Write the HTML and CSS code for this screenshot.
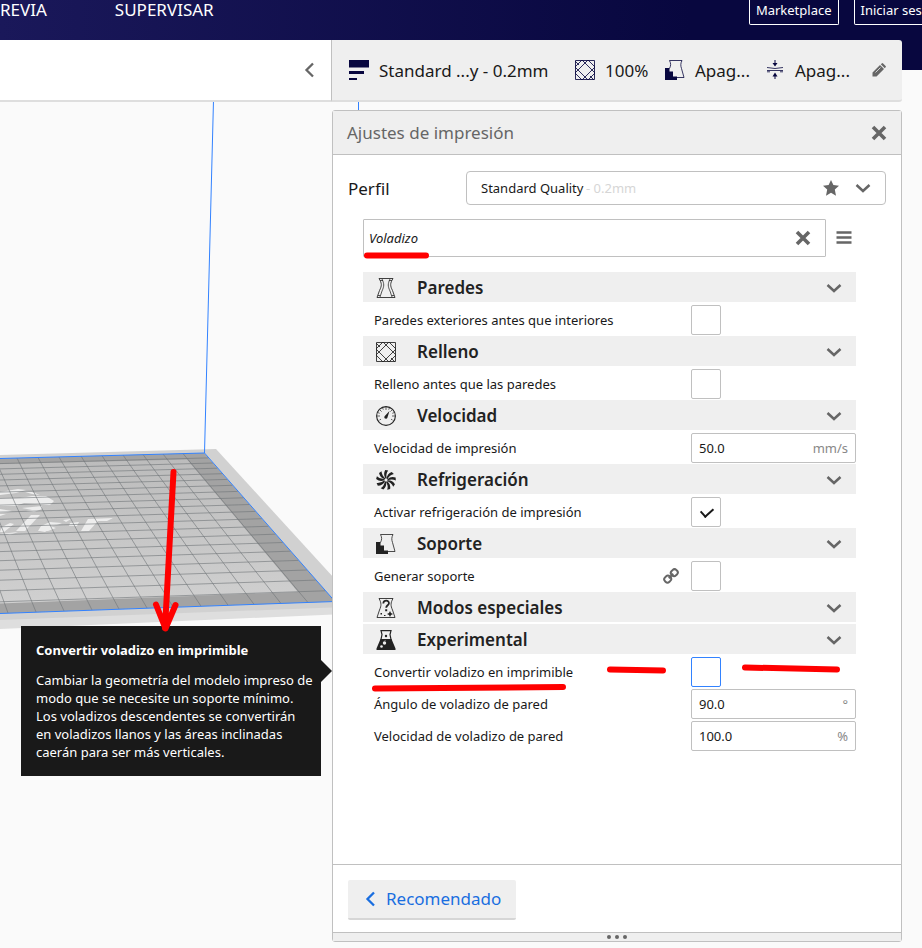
FILE: index.html
```html
<!DOCTYPE html>
<html lang="es">
<head>
<meta charset="utf-8">
<title>Ajustes de impresión</title>
<link rel="stylesheet" href="styles.css">
</head>
<body>
<svg class="symbols" aria-hidden="true">
  <symbol id="i-chevron" viewBox="0 0 16 16"><path d="M1.500 5L8 11l6.500-6" fill="none" stroke="currentColor" stroke-width="2.500"/></symbol>
  <symbol id="i-back" viewBox="0 0 16 16"><path d="M12 1.500L5.500 8l6.500 6.500" fill="none" stroke="currentColor" stroke-width="2.300"/></symbol>
  <symbol id="i-close" viewBox="0 0 16 16"><path d="M2 2l12 12M14 2L2 14" fill="none" stroke="currentColor" stroke-width="3.600"/></symbol>
  <symbol id="i-infill" viewBox="0 0 20 20"><g fill="none" stroke="currentColor" stroke-opacity=".85"><path d="M.5.500h19v19H.5z"/><path d="M0 7L7 0M0 13L13 0M7 0l13 13M13 0l7 7M0 7l13 13M0 13l7 7M20 7L7 20M20 13l-7 7M0 1l4 4M19 20l-4-4"/></g></symbol>
  <symbol id="i-support" viewBox="0 0 20 20"><path d="M4.500 8.500c1.500-3 1.500-5 0-8h12.500c-1.500 3-1.500 5-.5 8l2.500 9h-7" fill="none" stroke="currentColor" stroke-opacity=".8"/><path d="M0 8h4.500v3.500h3.500v5h4v3.500H0z" fill="currentColor"/></symbol>
  <symbol id="i-walls" viewBox="0 0 20 20"><g fill="none" stroke="currentColor" stroke-opacity=".85"><path d="M3 .5h14c-3 5-3 7-.5 12l2.500 7H1l2.500-7c2.500-5 2.500-7-.5-12z"/><path d="M6 1c2.300 5 2.300 7 0 12l-2 6M14 1c-2.300 5-2.300 7 0 12l2 6M4 2.500h3M13 2.500h3M2 17.500h2M16 17.500h2" stroke-width=".9"/></g></symbol>
  <symbol id="i-speed" viewBox="0 0 20 20"><circle cx="10" cy="10" r="9.400" fill="none" stroke="currentColor" stroke-width="1.100"/><path d="M10 1v3M1 10h3M16 10h3M3.600 3.600l2 2M16.400 3.600l-2 2M6.500 1.700l.8 2M13.500 1.700l-.8 2M1.700 6.500l2 .8M18.300 6.500l-2 .8M3.500 14l1.500-.8M16.500 14l-1.500-.8" stroke="currentColor" stroke-width=".7"/><path d="M13.500 5l-2 6.200a1.600 1.600 0 1 1-2.700-1.200z" fill="currentColor"/></symbol>
  <symbol id="i-fan" viewBox="0 0 20 20"><g fill="currentColor">
    <path id="blade" d="M9.500 8.500Q6.800 4.500 9.200.1L12.200.4Q9.500 4 10.700 8.500z"/>
    <use href="#blade" transform="rotate(40 10 10)"/><use href="#blade" transform="rotate(80 10 10)"/><use href="#blade" transform="rotate(120 10 10)"/><use href="#blade" transform="rotate(160 10 10)"/><use href="#blade" transform="rotate(200 10 10)"/><use href="#blade" transform="rotate(240 10 10)"/><use href="#blade" transform="rotate(280 10 10)"/><use href="#blade" transform="rotate(320 10 10)"/></g><circle cx="10" cy="10" r="1.200" fill="#efefef"/></symbol>
  <symbol id="i-modes" viewBox="0 0 20 20"><path d="M3 .5h14c-2.500 4.500-2.500 7-.5 11.500l2.500 7.500H1L3.500 12c2-4.500 2-7-.5-11.500z" fill="none" stroke="currentColor" stroke-opacity=".85"/><path d="M7.300 5.500c0-4 6-3.600 5.600-.2-.2 2-2.700 2-2.700 4.500" fill="none" stroke="currentColor" stroke-width="1.800"/><path d="M9.200 11.300h2v2h-2zM4.500 15h1.500v1.500H4.500zM8 17h1.500v1H8zM14 13l1 2 2 1-2 1-1 2-1-2-2-1 2-1z" fill="currentColor"/></symbol>
  <symbol id="i-flask" viewBox="0 0 20 20"><path d="M5 .6h10L14 4.500l1 5H5l1-5z" fill="none" stroke="currentColor" stroke-width="1.200"/><path d="M4.500 9H7l2 1.500L12 9h3.500l4 9.500V20H.5v-1.500z" fill="currentColor"/><circle cx="10" cy="6" r="1.200" fill="currentColor"/><circle cx="8.500" cy="13" r="1.700" fill="#efefef"/><circle cx="5.500" cy="16.500" r="1.300" fill="#efefef"/></symbol>
</svg>

<svg class="scene" viewBox="0 0 922 948" aria-hidden="true">
  <defs><linearGradient id="bed" x1="0" y1="0" x2="0" y2="1"><stop offset="0" stop-color="#bcbcbc"/><stop offset="1" stop-color="#d0d0d0"/></linearGradient></defs>
  <path d="M0 612L345 600V614L0 629z" fill="#dedede"/>
  <path d="M0 455L216 449L345 590V607L0 620z" fill="#d1d1d1"/>
  <path d="M0 458.500L204 453L335 601.500L0 613.500z" fill="#a3a3a3"/>
  <path d="M0 464L187 459.500L298 592L0 603.500z" fill="url(#bed)"/>
  <g fill="#ededed">
    <path d="M0 492l18-3 8 1-10 3-16 2zM22 491l10 1 8 3-8-1zM0 498l20 0 12-2 14 0 8 5-4 4-14-1-12-1-8 3-16 0zM0 509l12 2-4 1-8 1zM22 508l20-2 0 3-8 3-8-1 6-1zM0 514h6l-6 2z"/>
    <path d="M2 527l8-4 4 1-10 8H0zM31 515h9l-15 16h-9zM41 526l9-4 12 1-5 2-7 1 6 2-8 3H38zM63 520l8-1-5 3zM70 523l9-1-2 4h-8zM88 519l25-1-6 3h-9l-9 10h-8zM0 534l18-2-8 3zM40 531l8-1-3 2z"/>
  </g>
  <g class="grid-lines">
    <path d="M0 463.600L208.300 457.900M0 468.900L212.800 463M0 474.300L217.400 468.200M0 480L222.200 473.700M0 485.900L227.200 479.400M0 492.100L232.400 485.300M0 498.500L237.800 491.400M0 505.100L243.400 497.800M0 512.100L249.300 504.500M0 519.300L255.400 511.400M0 526.800L261.800 518.700M0 534.700L268.400 526.300M0 543L275.400 534.200M0 551.600L282.700 542.500M0 560.700L290.400 551.200M0 570.200L298.400 560.400M0 580.200L306.900 570M0 590.700L315.700 580.100M0 601.800L325.100 590.800"/>
    <path d="M183 453.600L308 602.600M163 454L281 603.500M143 454.500L254 604.300M123 455L228 605.200M102 455.700L201 606.200M81 456L173 607M59 457L147 608M38 457.400L119 609M17 458L92 610M-5 459L64 611M-26 459L36 612M-47 460L8 613"/>
  </g>
  <path d="M0 458.500L204.500 453L335 601.500L0 613.500M213.500 100L204.500 453M358.500 100V112" fill="none" stroke="#3282ff"/>
</svg>

<header class="topbar">
  <nav class="stages"><a href="#previa">REVIA</a><a href="#supervisar">SUPERVISAR</a></nav>
  <div class="account"><button type="button">Marketplace</button><button type="button">Iniciar sesión</button></div>
</header>

<div class="stage-menu">
  <div class="stage-left"><button class="icon-button" type="button" aria-label="Contraer"><svg class="s16"><use href="#i-back"/></svg></button></div>
  <div class="summary">
    <span class="summary-item"><svg class="s20" viewBox="0 0 20 20"><path d="M0 0h20v7.500H0zM0 11h15v3H0zM0 18h8v2H0z" fill="currentColor"/></svg><span>Standard ...y - 0.2mm</span></span>
    <span class="summary-item"><svg class="s20"><use href="#i-infill"/></svg><span>100%</span></span>
    <span class="summary-item"><svg class="s20"><use href="#i-support"/></svg><span>Apag...</span></span>
    <span class="summary-item"><svg class="s20" viewBox="0 0 20 20"><path d="M2 7.500q8 2 16 0M2 10.500h16M2 11.800h3M15 11.800h3" fill="none" stroke="currentColor" stroke-opacity=".8"/><path d="M9.500 0h1v3h2L10 6.500 7.500 3h2zM10 12.500L12.500 16.500h-2V19h-1v-2.500h-2z" fill="currentColor"/></svg><span>Apag...</span></span>
    <button class="icon-button" type="button" aria-label="Editar"><svg class="s14" viewBox="0 0 14 14"><path d="M.5 9.500L8 2l4 4L4.500 13.500H.5zM8.800 1.200l.9-.8q.7-.7 1.400 0l2.500 2.500q.7.700 0 1.400l-.8.900z" fill="currentColor"/><path d="M3.500 9.500l5-5" stroke="#efefef" stroke-width=".8"/></svg></button>
  </div>
</div>

<main class="panel">
  <div class="panel-header"><h1>Ajustes de impresión</h1><button class="icon-button" type="button" aria-label="Cerrar"><svg class="s16"><use href="#i-close"/></svg></button></div>
  <div class="panel-body">
    <div class="profile">
      <label for="perfil">Perfil</label>
      <div class="profile-box">
        <select id="perfil"><option>Standard Quality</option></select><span class="layer">- 0.2mm</span>
        <svg class="s16 star" viewBox="0 0 16 16"><path d="M8 0l2.400 5.100 5.600.6-4.200 3.900 1.200 6.100-5-3-5 3 1.200-6.100L0 5.700l5.600-.6z" fill="currentColor"/></svg>
        <svg class="s16"><use href="#i-chevron"/></svg>
      </div>
    </div>
    <div class="search">
      <div class="search-box"><input type="text" aria-label="Buscar ajustes" value="Voladizo"><button class="icon-button" type="button" aria-label="Borrar"><svg class="s16"><use href="#i-close"/></svg></button></div>
      <button class="icon-button" type="button" aria-label="Visibilidad"><svg class="s16" viewBox="0 0 16 16"><path d="M.5 2.500h15M.5 7.500h15M.5 12.500h15" stroke="currentColor" stroke-width="2.600"/></svg></button>
    </div>
    <div class="settings">
      <button class="category" type="button"><svg class="s20"><use href="#i-walls"/></svg><span>Paredes</span><svg class="s16"><use href="#i-chevron"/></svg></button>
      <div class="setting"><label for="s1">Paredes exteriores antes que interiores</label><div class="control"><input id="s1" type="checkbox"></div></div>
      <button class="category" type="button"><svg class="s20"><use href="#i-infill"/></svg><span>Relleno</span><svg class="s16"><use href="#i-chevron"/></svg></button>
      <div class="setting"><label for="s2">Relleno antes que las paredes</label><div class="control"><input id="s2" type="checkbox"></div></div>
      <button class="category" type="button"><svg class="s20"><use href="#i-speed"/></svg><span>Velocidad</span><svg class="s16"><use href="#i-chevron"/></svg></button>
      <div class="setting"><label for="s3">Velocidad de impresión</label><div class="control value"><input id="s3" type="text" value="50.0"><span>mm/s</span></div></div>
      <button class="category" type="button"><svg class="s20"><use href="#i-fan"/></svg><span>Refrigeración</span><svg class="s16"><use href="#i-chevron"/></svg></button>
      <div class="setting"><label for="s4">Activar refrigeración de impresión</label><div class="control"><input id="s4" type="checkbox" checked></div></div>
      <button class="category" type="button"><svg class="s20"><use href="#i-support"/></svg><span>Soporte</span><svg class="s16"><use href="#i-chevron"/></svg></button>
      <div class="setting"><label for="s5">Generar soporte</label><svg class="s16 link" viewBox="0 0 16 16"><g fill="none" stroke="currentColor" stroke-width="2"><rect x="1.300" y="8" width="6.800" height="6.200" rx="2.800" transform="rotate(-45 4.700 11.100)"/><rect x="7.900" y="1.600" width="6.800" height="6.200" rx="2.800" transform="rotate(-45 11.300 4.700)"/><path d="M5.800 10.200l4.400-4.400"/></g></svg><div class="control"><input id="s5" type="checkbox"></div></div>
      <button class="category" type="button"><svg class="s20"><use href="#i-modes"/></svg><span>Modos especiales</span><svg class="s16"><use href="#i-chevron"/></svg></button>
      <button class="category" type="button"><svg class="s20"><use href="#i-flask"/></svg><span>Experimental</span><svg class="s16"><use href="#i-chevron"/></svg></button>
      <div class="setting"><label for="s6">Convertir voladizo en imprimible</label><div class="control"><input id="s6" class="hovered" type="checkbox" aria-describedby="tip"></div>
        <div class="tooltip" id="tip" role="tooltip"><h2>Convertir voladizo en imprimible</h2><p>Cambiar la geometría del modelo impreso de<br>modo que se necesite un soporte mínimo.<br>Los voladizos descendentes se convertirán<br>en voladizos llanos y las áreas inclinadas<br>caerán para ser más verticales.</p></div>
      </div>
      <div class="setting"><label for="s7">Ángulo de voladizo de pared</label><div class="control value"><input id="s7" type="text" value="90.0"><span>°</span></div></div>
      <div class="setting"><label for="s8">Velocidad de voladizo de pared</label><div class="control value"><input id="s8" type="text" value="100.0"><span>%</span></div></div>
    </div>
  </div>
  <div class="panel-footer"><button class="recommended" type="button"><svg class="s16"><use href="#i-back"/></svg><span>Recomendado</span></button></div>
  <div class="grip"><i></i><i></i><i></i></div>
</main>

<svg class="marks" viewBox="0 0 922 948" aria-hidden="true">
  <path d="M367 255.500H426M375 688.500L563 687M610 669.500L663 670.500M745 667.500L837 669.500M173.500 472L165 628M156 604.500L165.500 628.500L175.500 605"/>
</svg>
</body>
</html>
```
FILE: styles.css
```css
* { box-sizing: border-box; }

body {
  margin: 0;
  min-height: 100vh;
  padding-bottom: 6px;
  display: flex;
  flex-direction: column;
  position: relative;
  overflow-x: hidden;
  background: #fafafa;
  color: #191919;
  font: 13px/18px "Noto Sans", sans-serif;
}

button, input, select { font: inherit; color: inherit; }
button { padding: 0; border: 0; background: none; }
h1, h2, p { margin: 0; font: inherit; }
svg { display: block; flex: none; }

.symbols { position: absolute; width: 0; height: 0; }
.s14 { width: 14px; height: 14px; }
.s16 { width: 16px; height: 16px; }
.s20 { width: 20px; height: 20px; }
.icon-button { color: #666; display: flex; align-items: center; justify-content: center; }

.scene, .marks { position: absolute; top: 0; left: 0; width: 922px; height: 948px; }
.grid-lines { fill: none; stroke: #707478; stroke-opacity: 0.6; }
.marks { z-index: 5; pointer-events: none; fill: none; stroke: #f00; stroke-width: 6px; stroke-linecap: round; stroke-linejoin: round; }

.topbar {
  position: relative;
  height: 70px;
  flex: none;
  overflow: hidden;
  display: flex;
  justify-content: space-between;
  align-items: flex-start;
  background: linear-gradient(90deg, #1a185a, #08073f 75%);
  color: #fff;
}
.stages { display: flex; gap: 68px; }
.stages a { color: inherit; text-decoration: none; font-size: 17px; line-height: 20px; }
.account { display: flex; gap: 15px; margin-right: -26px; }
.account button {
  height: 25px;
  padding: 0 6px 4px;
  border: 1px solid #fff;
  border-top: 0;
  border-radius: 0 0 2px 2px;
  white-space: nowrap;
}

.stage-menu {
  position: relative;
  display: flex;
  flex: none;
  height: 62px;
  margin: -30px 20px 8px 0;
}
.stage-left {
  flex: 1;
  display: flex;
  align-items: center;
  justify-content: flex-end;
  padding-right: 14px;
  background: #fff;
  border-bottom: 2px solid #dedede;
}
.summary {
  width: 571px;
  display: grid;
  grid-template-columns: 1fr 74px 84px 84px 28px;
  column-gap: 16px;
  align-items: center;
  padding: 0 9px 0 17px;
  background: #efefef;
  border-left: 1px solid #c0c0c0;
  border-bottom: 2px solid #dedede;
  border-radius: 0 3px 3px 0;
  font-size: 17px;
  line-height: 24px;
}
.summary-item { display: flex; align-items: center; gap: 10px; white-space: nowrap; }
.summary-item span { padding-top: 2px; }
.summary-item svg { color: #08073f; }

.panel {
  position: relative;
  flex: 1;
  align-self: flex-end;
  width: 570px;
  margin-right: 20px;
  display: flex;
  flex-direction: column;
  background: #fff;
  border: 1px solid #c0c0c0;
  border-radius: 3px;
}
.panel-header {
  height: 44px;
  display: flex;
  align-items: center;
  justify-content: space-between;
  padding: 0 14px;
  background: #efefef;
  border-bottom: 1px solid #c0c0c0;
  color: #666;
  font-size: 17px;
}
.panel-body { flex: 1; padding: 16px 15px 0; }
.profile { display: flex; align-items: center; justify-content: space-between; }
.profile label { font-size: 17px; padding-top: 2px; }
.profile-box {
  width: 420px;
  height: 34px;
  display: flex;
  align-items: center;
  gap: 2px;
  padding: 0 14px;
  border: 1px solid #c0c0c0;
  border-radius: 4px;
  color: #666;
}
.profile-box select { appearance: none; border: 0; padding: 0; background: none; color: #191919; }
.layer { color: #d6d6d6; }
.star { margin: 0 14px 0 auto; }

.search { display: flex; gap: 10px; margin: 14px 34px 15px 15px; }
.search-box {
  flex: 1;
  height: 38px;
  display: flex;
  align-items: center;
  padding: 0 14px 0 5px;
  border: 1px solid #c0c0c0;
  border-radius: 1px;
}
.search-box input { flex: 1; min-width: 0; border: 0; padding: 0; background: none; outline: 0; font-style: italic; }

.settings { margin: 0 30px 0 15px; }
.category {
  width: 100%;
  height: 30px;
  margin-bottom: 2px;
  display: flex;
  align-items: center;
  padding: 1px 14px 0 13px;
  background: #efefef;
  color: #222;
  text-align: left;
}
.category span { flex: 1; padding-left: 21px; font-size: 17px; font-weight: 600; }
.category .s16 { color: #666; }
.setting { position: relative; height: 32px; display: flex; align-items: center; padding-left: 11px; }
.setting label { flex: 1; }
.link { color: #666; margin-right: 12px; }
.control { width: 165px; height: 30px; }
.value { display: flex; align-items: center; padding: 0 7px; border: 1px solid #c0c0c0; border-radius: 2px; }
.value input { flex: 1; min-width: 0; padding: 0; border: 0; outline: 0; background: none; }
.value span { color: #888; }
.control input[type="checkbox"] {
  appearance: none;
  display: block;
  width: 30px;
  height: 30px;
  margin: 0;
  border: 1px solid #c0c0c0;
  border-radius: 2px;
  background: #fff;
}
.control input[type="checkbox"]:checked::before {
  content: "";
  display: block;
  width: 6px;
  height: 10px;
  margin: 7px 0 0 11px;
  border: solid #191919;
  border-width: 0 2px 2px 0;
  transform: rotate(48deg);
}
.control input.hovered { border-color: #3282ff; }

.tooltip {
  position: absolute;
  top: -30px;
  right: calc(100% + 42px);
  width: 300px;
  padding: 15px;
  background: #191919;
  color: #fff;
  white-space: nowrap;
}
.tooltip::after {
  content: "";
  position: absolute;
  left: 100%;
  top: 34px;
  border: 11px solid transparent;
  border-left-color: #191919;
  border-right: 0;
}
.tooltip h2 { font-weight: 700; margin-bottom: 12px; }

.panel-footer { padding: 15px; border-top: 1px solid #c0c0c0; height: 68px; }
.recommended {
  height: 40px;
  display: flex;
  align-items: center;
  gap: 8px;
  padding: 0 15px 0 14px;
  background: #efefef;
  border-bottom: 2px solid #d6d6d6;
  border-radius: 2px;
  color: #196ee0;
  font-size: 17px;
}
.grip {
  height: 9px;
  display: flex;
  align-items: center;
  justify-content: center;
  gap: 4px;
  background: #efefef;
  border-top: 1px solid #c0c0c0;
}
.grip i { width: 4px; height: 4px; border-radius: 50%; background: #666; }
```
